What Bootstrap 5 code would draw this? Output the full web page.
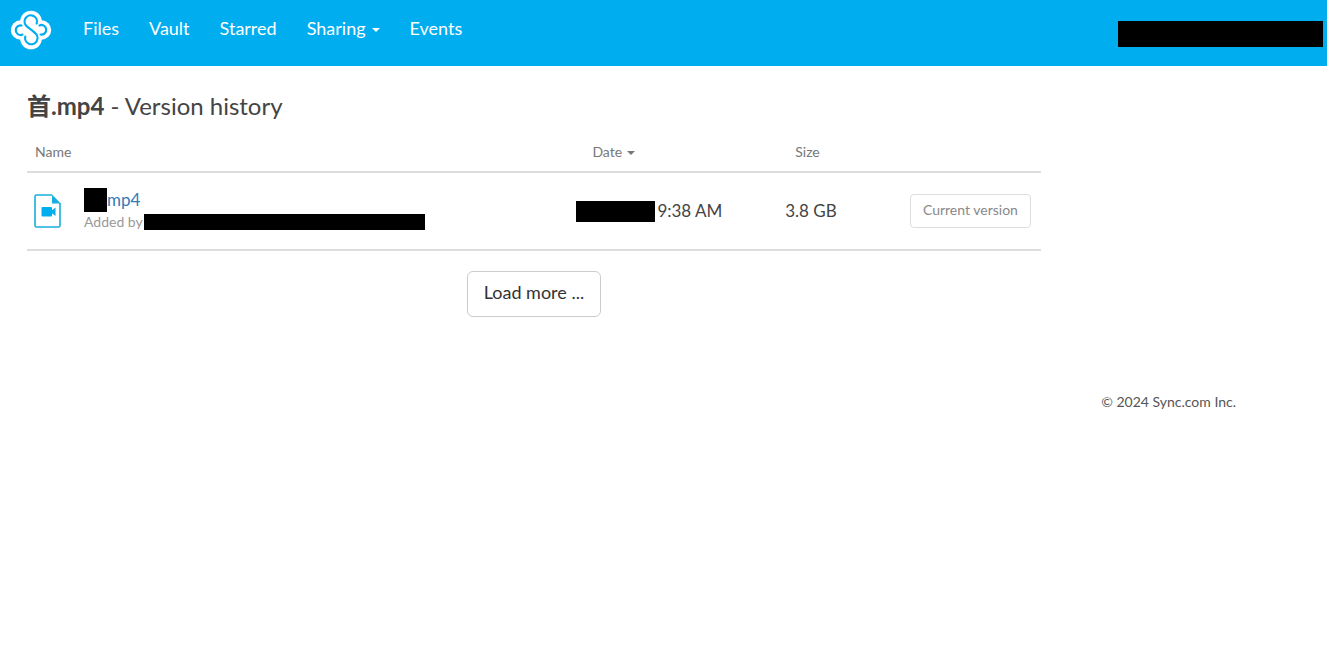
<!DOCTYPE html>
<html lang="en">
<head>
<meta charset="utf-8">
<meta name="viewport" content="width=device-width, initial-scale=1">
<title>Version history</title>
<link href="https://cdn.jsdelivr.net/npm/bootstrap@5.3.0/dist/css/bootstrap.min.css" rel="stylesheet">
<style>
body { font-family: Lato, "Noto Sans CJK JP", sans-serif; font-size: 17px; line-height: 24px; color: #444; background: #fff; }
.topbar { background: #00adef; min-height: 66px; padding: 2px 4px 0 10px; }
.brand { margin-bottom: 8px; }
.topbar .navbar-nav { gap: 30px; margin: 0 0 12px 31px; }
.topbar .navbar-nav .nav-link { color: #fff; padding: 0; font-size: 18px; line-height: 24px; }
.caret { display: inline-block; border: 4px solid transparent; border-top-color: currentColor; border-bottom: 0; vertical-align: middle; margin-left: 5px; }
.nav-link .caret { margin-left: 6px; }
.redact { display: inline-block; background: #000; flex-shrink: 0; }
.redact-user { width: 205px; height: 26px; }
.redact-name { width: 23px; height: 24px; }
.redact-owner { width: 281px; height: 16px; }
.redact-date { width: 79px; height: 21px; }
.history { padding: 24px 65px 0 27px; }
.history h1 { font-size: 24px; line-height: 32px; font-weight: 400; margin: 0; color: #444; }
.versions { table-layout: fixed; width: 100%; margin: 12px 0 20px; min-width: 860px; }
.versions th { font-weight: 400; font-size: 14px; line-height: 20px; color: #777; padding: 8px 8px 9px; border-bottom: 2px solid #ddd; }
.versions td { height: 78px; padding: 0 8px; border-bottom: 2px solid #ddd; vertical-align: middle; }
.versions .file-cell { padding-left: 7px; }
.size-label { padding-left: 10px; }
.sort { font: inherit; color: inherit; background: none; border: 0; padding: 0; }
.file-link { color: #337ab7; text-decoration: none; line-height: 24px; }
.file-row { gap: 23px; }
.file-text { padding-bottom: 3px; }
.added { font-size: 14px; line-height: 20px; color: #999; gap: 1px; }
.stamp { gap: 2px; }
.tag-btn { font-size: 14px; line-height: 20px; padding: 5px 12px 7px; border-radius: 4px; white-space: nowrap; }
.tag-btn:disabled { color: #888; border-color: #ddd; opacity: 1; }
.more-btn { font-size: 18px; line-height: 24px; color: #333; border: 1px solid #ccc; padding: 8px 16px 12px; border-radius: 6px; }
.legal { font-size: 14px; line-height: 20px; color: #555; padding: 75px 91px 20px 0; }
</style>
</head>
<body>
<nav class="navbar navbar-expand topbar" aria-label="Main">
  <a href="#" class="d-block brand" aria-label="Sync home">
    <svg class="d-block" width="42" height="40" viewBox="0 0 42 40" fill="none" aria-hidden="true">
      <g fill="#fff"><circle cx="21" cy="11.500" r="10.800"/><circle cx="21" cy="28.500" r="10.800"/><circle cx="10.500" cy="20" r="9.700"/><circle cx="31.500" cy="20" r="9.700"/></g>
      <g stroke="#00adef" stroke-width="2.200" stroke-linecap="round">
        <path d="M26.700 13.500A6.200 6.200 0 1 0 16.800 16.300C19 18.500 23 20.500 25.200 23.200A6.200 6.200 0 1 1 15.300 26.500"/>
        <path d="M11.500 15.500A4.800 4.800 0 1 0 12.500 24.600"/>
        <path d="M29.500 15.400A4.800 4.800 0 1 1 30.500 24.500"/>
      </g>
    </svg>
  </a>
  <ul class="navbar-nav">
    <li class="nav-item"><a class="nav-link" href="#">Files</a></li>
    <li class="nav-item"><a class="nav-link" href="#">Vault</a></li>
    <li class="nav-item"><a class="nav-link" href="#">Starred</a></li>
    <li class="nav-item"><a class="nav-link" href="#" aria-haspopup="true">Sharing<span class="caret"></span></a></li>
    <li class="nav-item"><a class="nav-link" href="#">Events</a></li>
  </ul>
  <span class="redact redact-user ms-auto"></span>
</nav>
<div class="row g-0">
  <main class="col-10 history">
    <h1><strong>首.mp4</strong> - Version history</h1>
    <table class="versions">
      <colgroup><col style="width:53.4%"><col style="width:20.6%"><col style="width:12.3%"><col style="width:13.7%"></colgroup>
      <thead>
        <tr>
          <th scope="col">Name</th>
          <th scope="col" class="ps-4"><button type="button" class="sort">Date<span class="caret"></span></button></th>
          <th scope="col"><span class="size-label">Size</span></th>
          <th scope="col" aria-label="Status"></th>
        </tr>
      </thead>
      <tbody>
        <tr>
          <td class="file-cell">
            <div class="d-flex align-items-center file-row">
              <svg class="flex-shrink-0" width="27" height="34" viewBox="0 0 27 34" aria-hidden="true">
                <path d="M18 1H2.500A1.500 1.500 0 0 0 1 2.500V31.500A1.500 1.500 0 0 0 2.500 33H24.500A1.500 1.500 0 0 0 26 31.500V9" fill="none" stroke="#1badde" stroke-width="1.600"/>
                <path d="M18 .500 26.800 9.500H18z" fill="#1badde"/>
                <rect x="7.500" y="13" width="10.500" height="9.500" rx="1" fill="#00adef"/>
                <path d="M17 17 21.500 13.500V22L17 18.500z" fill="#00adef"/>
              </svg>
              <div class="file-text">
                <div class="d-flex align-items-center"><span class="redact redact-name"></span><a href="#" class="file-link">mp4</a></div>
                <div class="d-flex align-items-center added">Added by<span class="redact redact-owner"></span></div>
              </div>
            </div>
          </td>
          <td><div class="d-flex align-items-center stamp"><span class="redact redact-date"></span><span>9:38 AM</span></div></td>
          <td>3.8 GB</td>
          <td><button type="button" class="btn tag-btn" disabled>Current version</button></td>
        </tr>
      </tbody>
    </table>
    <div class="text-center"><button type="button" class="btn more-btn">Load more ...</button></div>
  </main>
</div>
<footer class="legal text-end">© 2024 Sync.com Inc.</footer>
<script src="https://cdn.jsdelivr.net/npm/bootstrap@5.3.0/dist/js/bootstrap.bundle.min.js"></script>
</body>
</html>
